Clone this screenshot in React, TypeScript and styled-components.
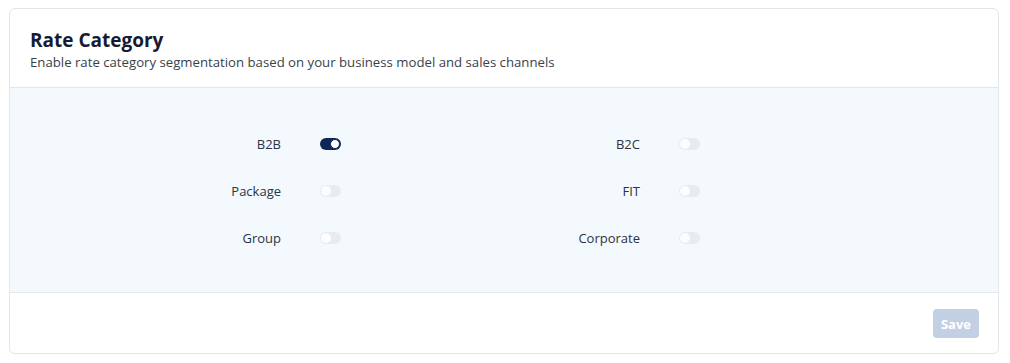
import React, { useState } from "react";
import styled, { createGlobalStyle } from "styled-components";

const GlobalStyle = createGlobalStyle`
  html, body {
    margin: 0;
    padding: 0;
    background: #ffffff;
    font-family: "Open Sans", "Noto Sans", sans-serif;
  }
`;

const Page = styled.div`
  padding: 8px 11px 8px 9px;
`;

const Card = styled.section`
  border: 1px solid #e3e6ea;
  border-radius: 6px;
  background: #ffffff;
  overflow: hidden;
`;

const Header = styled.header`
  padding: 20px 20px 16px;
  height: 42px;
  border-bottom: 1px solid #e3e8ee;
`;

const Title = styled.h2`
  margin: 0;
  font-size: 19px;
  line-height: 22px;
  font-weight: 700;
  color: #161b33;
`;

const Subtitle = styled.p`
  margin: 2px 0 0;
  font-size: 13.2px;
  line-height: 18px;
  color: #3a3f4a;
`;

const Body = styled.div`
  background: #f4f9fd;
  padding: 44px 0 42px 111px;
  border-bottom: 1px solid #e3e8ee;
  display: grid;
  grid-template-columns: repeat(2, 359px);
  row-gap: 23px;
`;

const Row = styled.div`
  display: flex;
  align-items: center;
  height: 24px;
  gap: 39px;
`;

const Label = styled.span`
  width: 160px;
  text-align: right;
  font-size: 13px;
  color: #2e3340;
`;

const Track = styled.button<{ $on: boolean }>`
  position: relative;
  width: 21px;
  height: 12px;
  padding: 0;
  border: none;
  border-radius: 6px;
  cursor: pointer;
  background: ${(p) => (p.$on ? "#0f2557" : "#e4e7ec")};
  opacity: ${(p) => (p.$on ? 1 : 0.7)};
`;

const Knob = styled.span<{ $on: boolean }>`
  position: absolute;
  top: 1px;
  left: ${(p) => (p.$on ? "10px" : "1px")};
  width: 10px;
  height: 10px;
  border-radius: 50%;
  background: #ffffff;
  box-sizing: border-box;
  border: ${(p) => (p.$on ? "1px solid #0f2557" : "none")};
`;

const Footer = styled.footer`
  display: flex;
  justify-content: flex-end;
  padding: 16px 19px 15px;
`;

const SaveButton = styled.button`
  width: 46px;
  height: 29px;
  border: none;
  border-radius: 4px;
  background: #c3d0e3;
  color: #ffffff;
  font-family: "Open Sans", "Noto Sans", sans-serif;
  font-size: 13px;
  font-weight: 700;
  cursor: not-allowed;
`;

const categories = [
  ["B2B", "B2C"],
  ["Package", "FIT"],
  ["Group", "Corporate"],
];

export default function App() {
  const [enabled, setEnabled] = useState<Record<string, boolean>>({ B2B: true });

  const toggle = (name: string) =>
    setEnabled((prev) => ({ ...prev, [name]: !prev[name] }));

  return (
    <>
      <GlobalStyle />
      <Page>
        <Card>
          <Header>
            <Title>Rate Category</Title>
            <Subtitle>
              Enable rate category segmentation based on your business model and sales channels
            </Subtitle>
          </Header>
          <Body>
            {categories.flat().map((name) => {
              const on = !!enabled[name];
              return (
                <Row key={name}>
                  <Label>{name}</Label>
                  <Track $on={on} onClick={() => toggle(name)} aria-pressed={on}>
                    <Knob $on={on} />
                  </Track>
                </Row>
              );
            })}
          </Body>
          <Footer>
            <SaveButton disabled>Save</SaveButton>
          </Footer>
        </Card>
      </Page>
    </>
  );
}
